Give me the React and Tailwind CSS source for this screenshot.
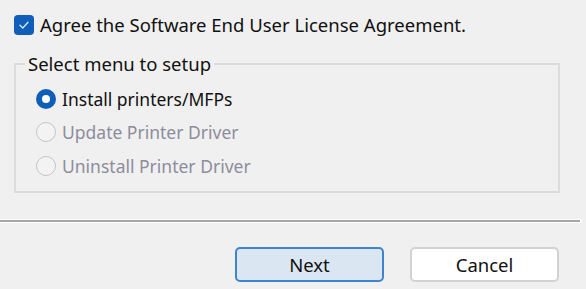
import React from "react";

function Radio({ checked, disabled, label }) {
  return (
    <div className="flex items-center h-[33.5px]">
      {checked ? (
        <span className="w-[20px] h-[20px] rounded-full bg-[#0f5fb8] flex items-center justify-center shrink-0">
          <span className="w-[8px] h-[8px] rounded-full bg-white" />
        </span>
      ) : (
        <span className="w-[20px] h-[20px] rounded-full border-[1.5px] border-[#c4c4c4] bg-[#f3f3f3] shrink-0" />
      )}
      <span className={"ml-[6px] text-[17.5px] " + (disabled ? "text-[#8d8d9c]" : "text-[#111]")}>{label}</span>
    </div>
  );
}

export default function App() {
  return (
    <div
      className="w-[586px] h-[289px] bg-[#f0f0f0] overflow-hidden flex flex-col text-[18.5px] leading-[24px]"
      style={{ fontFamily: '"Noto Sans", "Open Sans", sans-serif' }}
    >
      <div className="flex items-center pl-[14px] pt-[13px]">
        <span className="w-[20px] h-[20px] rounded-[4px] bg-[#0f5fb8] flex items-center justify-center shrink-0">
          <svg width="12" height="12" viewBox="0 0 12 12" fill="none">
            <path d="M2 6.3 L4.8 9 L10 3.3" stroke="#dbe8f7" strokeWidth="1.3" strokeLinecap="round" strokeLinejoin="round" />
          </svg>
        </span>
        <span className="ml-[6px] text-[#111]">Agree the Software End User License Agreement.</span>
      </div>

      <fieldset className="ml-[14px] mt-[15px] w-[546px] h-[141px] border-2 border-[#dcdcdc] pl-[20px] pt-0">
        <legend className="-ml-[11px] px-[3px] text-[#111]">Select menu to setup</legend>
        <div className="flex flex-col mt-[6px]">
          <Radio checked label="Install printers/MFPs" />
          <Radio disabled label="Update Printer Driver" />
          <Radio disabled label="Uninstall Printer Driver" />
        </div>
      </fieldset>

      <div className="mt-[26px] w-[582px] h-[4px] rounded-r-full bg-white flex items-center">
        <div className="w-[580px] h-[2px] bg-[#a6a6a6]" />
      </div>

      <div className="flex justify-end gap-[26px] mt-[24px] pr-[27px]">
        <button className="w-[149px] h-[35px] rounded-[5px] border-2 border-[#3d86cf] bg-[#dae6f2] text-[#111]">
          Next
        </button>
        <button className="w-[149px] h-[35px] rounded-[5px] border-2 border-[#d2d2d2] bg-white text-[#111]">
          Cancel
        </button>
      </div>
    </div>
  );
}
